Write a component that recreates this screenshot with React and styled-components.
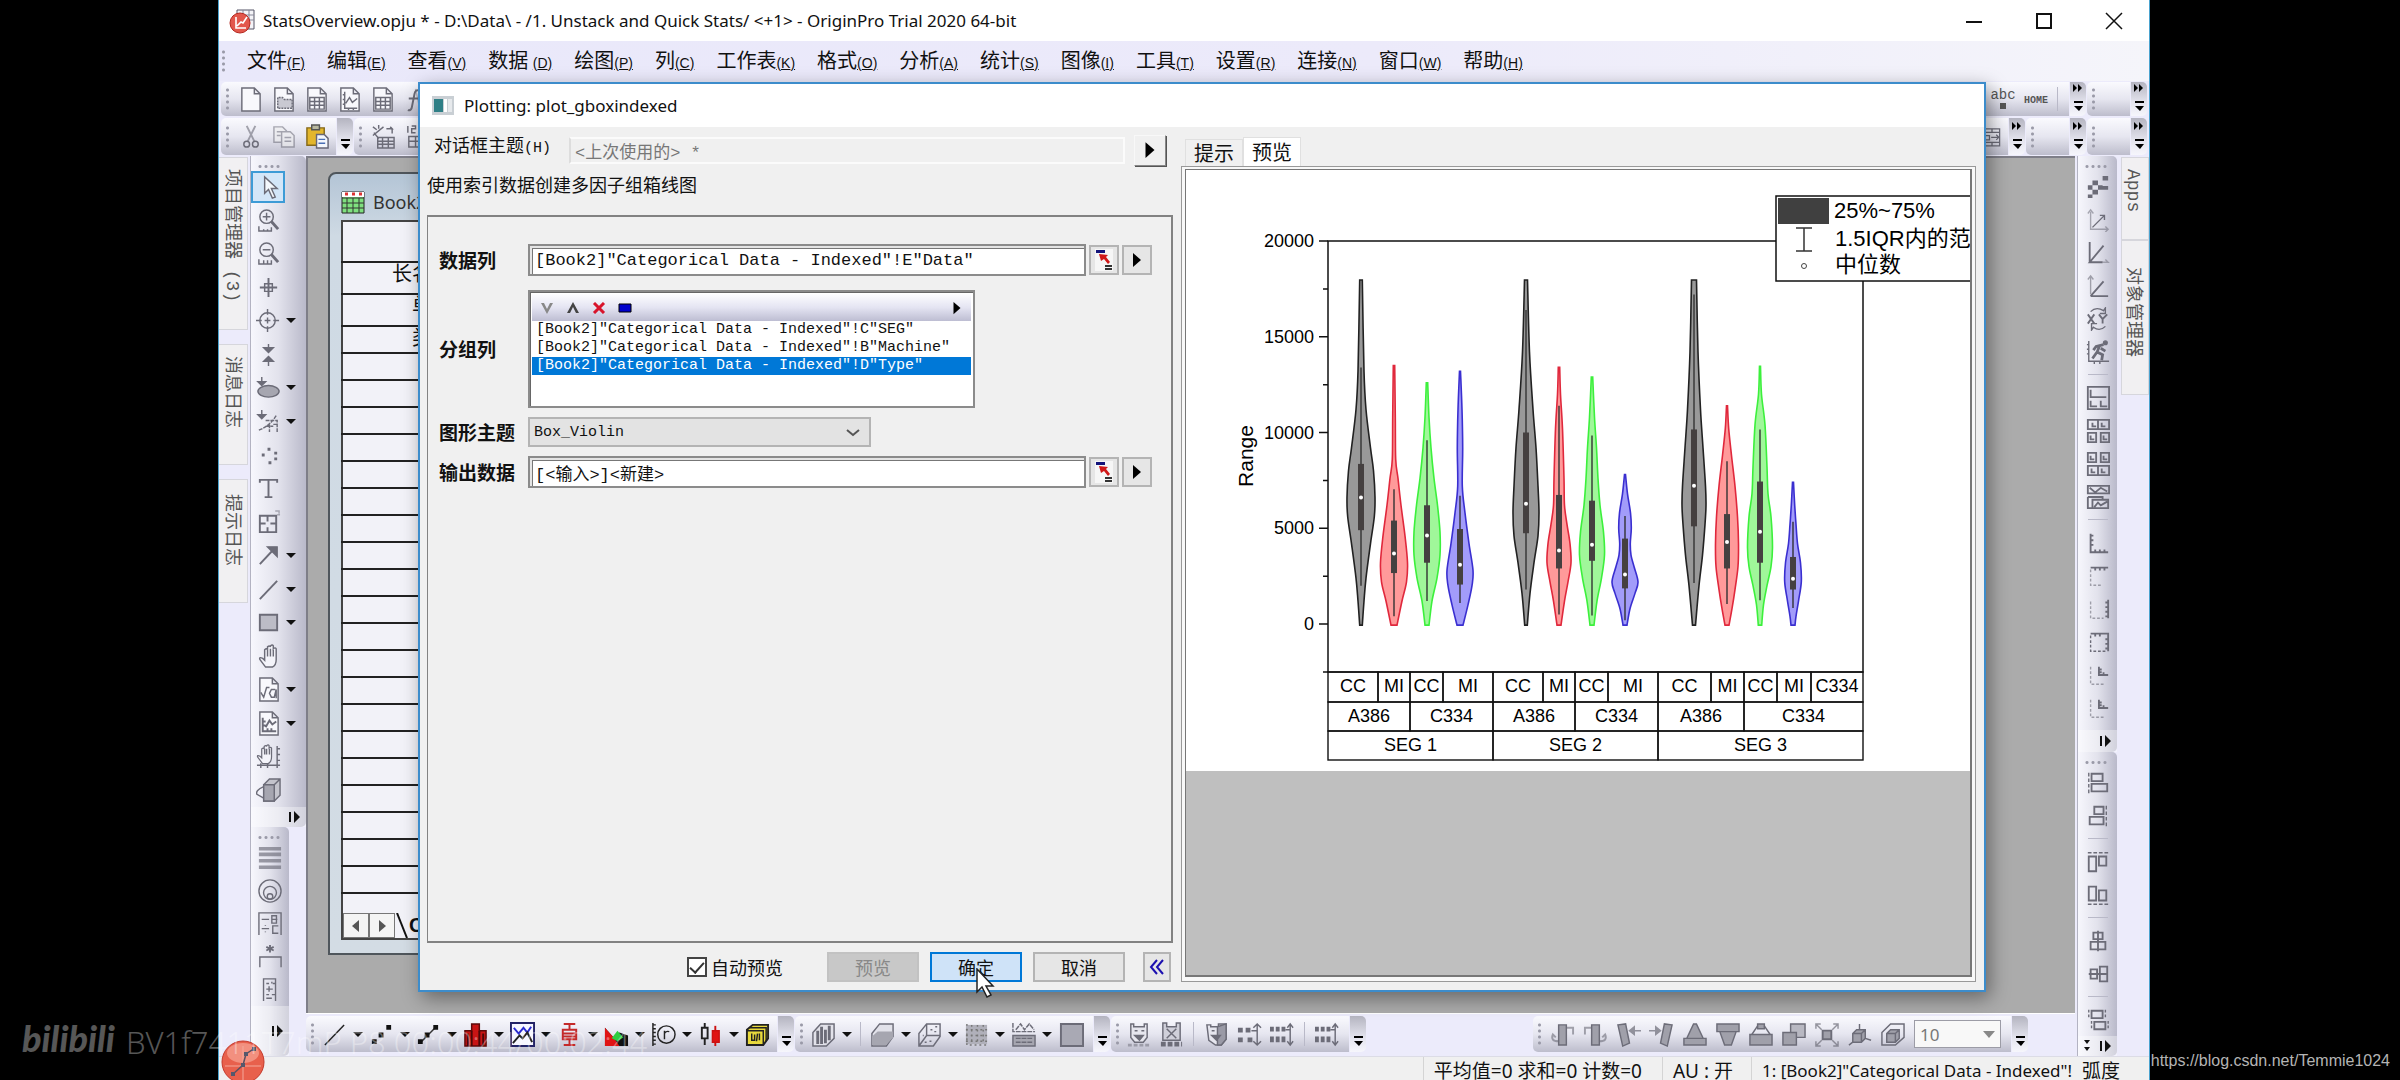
import { useState } from 'react';
import styled, { createGlobalStyle, css } from 'styled-components';

const GlobalStyle = createGlobalStyle`
  * {
    box-sizing: border-box;
  }

  body {
    margin: 0;
    background: #000;
    font-family: 'Noto Sans', 'Noto Sans CJK SC', sans-serif;
    color: #111;
  }

  button, input, select {
    font: inherit;
    color: inherit;
    margin: 0;
    padding: 0;
  }
`;

const cjk = "'Noto Sans CJK SC', sans-serif";
const mono = "'Liberation Mono', 'Noto Sans CJK SC', monospace";

/* ---------- shell ---------- */

const Screen = styled.div`
  position: relative;
  display: flex;
  height: 100vh;
  padding: 0 250px 0 218px;
  overflow: hidden;
  background: #000;
`;

const AppWindow = styled.div`
  position: relative;
  flex: 1;
  min-width: 0;
  display: flex;
  flex-direction: column;
  background: #ecebfb;
  border: solid #4aa3cf;
  border-width: 0 1px;
`;

const TitleBar = styled.header`
  display: flex;
  align-items: center;
  height: 41px;
  padding-left: 10px;
  background: #fff;
`;

const TitleText = styled.h1`
  flex: 1;
  margin: 0 0 0 8px;
  font-size: 17px;
  font-weight: 400;
  line-height: 24px;
  white-space: nowrap;
`;

const WindowButton = styled.button`
  width: 70px;
  height: 36px;
  border: 0;
  background: none;

  svg {
    display: block;
    margin: 0 auto;
  }
`;

const MenuBar = styled.nav`
  display: flex;
  align-items: center;
  gap: 22px;
  height: 40px;
  padding: 0 3px;
  background: linear-gradient(90deg, #e9e8fa, #eceafa 60%, #f5f5fa);
`;

const MenuButton = styled.button`
  border: 0;
  background: none;
  font-family: ${cjk};
  font-size: 20px;
  line-height: 30px;
  white-space: nowrap;

  span {
    font-family: 'Liberation Sans', sans-serif;
    font-size: 14px;
    text-decoration: underline;
  }
`;

const Grip = styled.i`
  flex: none;
  align-self: center;
  width: ${p => (p.$flat ? '24px' : '3px')};
  height: ${p => (p.$flat ? '3px' : '24px')};
  margin-right: ${p => p.$after || '0'};
  background-image: radial-gradient(circle, #9a9aa8 1px, transparent 2px);
  background-size: ${p => (p.$flat ? '6px 3px' : '3px 6px')};
`;

const ToolRow = styled.div`
  display: flex;
  gap: 1px;
  height: ${p => p.$height};
  padding: 1px 2px;
`;

const ToolGroup = styled.div`
  display: flex;
  align-items: center;
  flex: ${p => p.$flex || 'none'};
  width: ${p => p.$width || 'auto'};
  padding: 0 5px;
  border-radius: 5px 0 0 5px;
  background: linear-gradient(#fafafe, #e6e6f0 50%, #bdbdcc);
`;

const Overflow = styled.button`
  flex: none;
  width: 16px;
  border: 0;
  border-radius: 0 5px 5px 0;
  background: linear-gradient(#b4b4c0, #e4e4ee 60%, #f6f6fc);

  svg {
    display: block;
    margin: auto auto 2px;
  }
`;

const Spacer = styled.div`
  flex: 1;
`;

const IconButton = styled.button`
  flex: none;
  display: flex;
  align-items: center;
  justify-content: center;
  width: ${p => p.$width || '33px'};
  height: 32px;
  border: 0;
  background: none;
  color: #6c6c78;
`;

const ArrowButton = styled.button`
  flex: none;
  width: ${p => (p.$narrow ? '12px' : '17px')};
  height: 30px;
  border: 0;
  background: none;

  &::before {
    content: '';
    display: block;
    width: 0;
    margin: 0 auto;
    border: 5px solid transparent;
    border-top-color: #111;
    border-bottom-width: 0;
  }
`;

const Divider = styled.i`
  flex: none;
  align-self: center;
  ${p => (p.$flat
    ? css`width: 20px; height: 1px; margin: 6px 0;`
    : css`width: 1px; height: 24px; margin: 0 6px 0 5px;`)}
  background: #b9b9c8;
`;

/* ---------- body ---------- */

const Body = styled.div`
  flex: 1;
  min-height: 0;
  display: flex;
`;

const SideTabs = styled.div`
  display: flex;
  flex-direction: column;
  width: ${p => (p.$right ? '32px' : '29px')};
  gap: ${p => (p.$right ? '0' : '14px')};
  padding: 1px 0 0 ${p => (p.$right ? '4px' : '0')};
`;

const SideTab = styled.button`
  height: ${p => p.$height};
  padding: ${p => p.$pad || '11px'} 3px 0 0;
  border: 1px solid #d6d6dc;
  border-left-width: ${p => (p.$right ? '1px' : '0')};
  background: #f1f0f2;
  color: #555;
  font-family: ${mono};
  font-size: 18px;
  line-height: 24px;
  writing-mode: vertical-rl;
  text-orientation: sideways;
  text-align: left;
`;

const PaletteColumn = styled.div`
  display: flex;
  flex-direction: column;
  width: ${p => p.$width};
  margin-left: 2px;
  border-left: 1px solid #b3b3c2;
`;

const Palette = styled.div`
  display: flex;
  flex-direction: column;
  flex: ${p => (p.$grow ? '1' : 'none')};
  width: ${p => p.$width || 'auto'};
  padding-top: 6px;
  border-radius: 0 5px 5px 0;
  background: linear-gradient(90deg, #f7f7fd, #e2e2ec 50%, #b9b9ca);
`;

const PaletteRow = styled.div`
  flex: ${p => (p.$grow ? '1' : 'none')};
  display: flex;
  align-items: center;
  justify-content: ${p => (p.$center ? 'center' : 'flex-start')};
  min-height: 33px;
`;

const ToolButton = styled(IconButton)`
  width: 34px;
  ${p => p.$active && css`
    border: 2px solid #3d9bd6;
    background: #d3e6f8;
  `}
`;

const PaletteGrip = styled.div`
  display: flex;
  height: 8px;
  padding-left: 6px;
`;

const PaletteEnd = styled.div`
  display: flex;
  align-items: center;
  justify-content: flex-end;
  gap: 10px;
  height: ${p => p.$height || '20px'};
  padding-right: 5px;
  background: rgba(255, 255, 255, 0.35);
`;

const Center = styled.div`
  flex: 1;
  min-width: 0;
  display: flex;
  flex-direction: column;
`;

const Workspace = styled.main`
  position: relative;
  flex: 1;
  overflow: hidden;
  border: solid #7e7e88;
  border-width: 2px 0 0 2px;
  background: #ababab;
`;

const BottomTools = styled.div`
  display: flex;
  gap: 1px;
  height: 43px;
  padding: 2px 47px 4px 0;
  border-top: 1px solid #fff;
`;

const StatusBar = styled.footer`
  display: flex;
  align-items: flex-start;
  justify-content: flex-end;
  height: 24px;
  padding-right: 29px;
  background: #f0f0f0;
  border-top: 1px solid #dcdce6;
  font-size: 19px;
  line-height: 28px;
  white-space: nowrap;
`;

const StatusCell = styled.span`
  padding: 0 10px;
  border-left: 1px solid #d4d4d4;
  margin-left: ${p => p.$gap || '0'};
  font-size: ${p => (p.$long ? '17px' : '19px')};
`;

const SizeSelect = styled.select`
  appearance: none;
  width: 87px;
  height: 28px;
  margin: 0 5px;
  padding-left: 5px;
  border: 1px solid #9c9ca6;
  border-radius: 0;
  background: #f8f8f8;
  color: #777;
  font-size: 17px;
  opacity: 1;
`;

const SelectBox = styled.div`
  position: relative;
  display: inline-flex;

  svg {
    position: absolute;
    right: 11px;
    top: 50%;
    margin-top: -3px;
    pointer-events: none;
  }
`;

/* ---------- Book2 window ---------- */

const BookWindow = styled.section`
  position: absolute;
  left: 20px;
  top: 14px;
  bottom: 58px;
  width: 360px;
  display: flex;
  flex-direction: column;
  padding: 0 11px 13px;
  border: 2px solid #4f565c;
  border-radius: 8px 8px 0 0;
  background: linear-gradient(#b4c5d6, #cfdae4 8%, #d3dce4);
`;

const BookTitle = styled.h2`
  display: flex;
  align-items: center;
  gap: 8px;
  height: 46px;
  margin: 0;
  padding-top: 10px;
  font-size: 18px;
  font-weight: 400;
  color: #333;
`;

const Sheet = styled.table`
  flex: none;
  width: 100%;
  border-collapse: collapse;
  border-left: 2px solid #444;
  background: #f2f2f8;

  th {
    height: 27px;
    padding: 0 223px 0 0;
    border-bottom: 2px solid #222;
    font-family: ${cjk};
    font-size: 20px;
    font-weight: 400;
    line-height: 20px;
    text-align: right;
    vertical-align: top;
    white-space: nowrap;
  }

  tr:first-child th {
    height: 41px;
    border-top: 2px solid #444;
  }

  tr:nth-child(2) th,
  tr:nth-child(3) th {
    height: 32px;
  }
`;

const SheetTabs = styled.div`
  display: flex;
  align-items: flex-end;
  flex: 1;
  background: #f2f2f8;
  border-left: 2px solid #444;
  border-bottom: 2px solid #444;
  font: bold 20px/26px 'Liberation Sans', sans-serif;
`;

const ScrollButton = styled.button`
  width: 26px;
  height: 25px;
  border: 1px solid #777;
  background: #f4f4f4;

  svg {
    display: block;
    margin: auto;
  }
`;

/* ---------- dialog ---------- */

const Dialog = styled.section`
  position: absolute;
  left: 199px;
  right: 163px;
  top: 82px;
  bottom: 88px;
  display: flex;
  flex-direction: column;
  border: 2px solid #3c8ccb;
  background: #f0f0f0;
  box-shadow: 4px 6px 18px rgba(0, 0, 0, 0.4);
  font-family: ${cjk};
`;

const DialogTitle = styled.h2`
  display: flex;
  align-items: center;
  gap: 10px;
  height: 43px;
  margin: 0;
  padding: 0 12px;
  background: #fff;
  font-family: 'Noto Sans', sans-serif;
  font-size: 17px;
  font-weight: 400;
`;

const DialogBody = styled.div`
  flex: 1;
  min-height: 0;
  display: grid;
  grid-template-columns: 746px 1fr;
  gap: 8px;
  padding: 8px 8px 8px 7px;
`;

const FormPane = styled.form`
  display: flex;
  flex-direction: column;
  min-height: 0;
`;

const ThemeRow = styled.div`
  display: flex;
  align-items: center;
  height: 31px;
  padding: 0 7px;
  font-size: 18px;

  label {
    width: 135px;
    line-height: 24px;
    margin-bottom: 8px;
    white-space: nowrap;
  }

  label span {
    font-family: ${mono};
    font-size: 15px;
  }
`;

const ThemeInput = styled.input`
  flex: 1;
  height: 27px;
  margin-right: 9px;
  padding: 0 4px;
  border: 2px solid #fbfbfb;
  border-left-color: #ddd;
  background: #f0f0f0;
  color: #777;
  font-family: ${mono};
  font-size: 17px;
`;

const RaisedButton = styled.button`
  width: 32px;
  height: 31px;
  border: 1px solid;
  border-color: #f8f8f8 #888 #888 #f8f8f8;
  background: #f0f0f0;
  box-shadow: 1px 1px 0 #555;
`;

const Description = styled.p`
  margin: 6px 0 19px;
  font-size: 18px;
  line-height: 24px;
`;

const Options = styled.div`
  flex: 1;
  display: flex;
  flex-direction: column;
  gap: 9px;
  padding: 27px 19px 0 11px;
  border: 2px solid #828282;
  border-left-width: 1px;
`;

const OptionRow = styled.div`
  display: flex;
  align-items: center;
  gap: 3px;
  margin-bottom: ${p => p.$after || '0'};
`;

const OptionLabel = styled.label`
  width: 86px;
  font-size: 19px;
  font-weight: 700;
  line-height: 24px;
`;

const DataInput = styled.input`
  flex: 1;
  height: 32px;
  padding: 0 5px;
  border: 2px solid #8b8b8b;
  background: #fff;
  box-shadow: inset 1px 1px 0 1px #e4e4e4, inset 2px 2px 0 1px #777;
  font-family: ${mono};
  font-size: 17px;
`;

const SmallButton = styled.button`
  display: flex;
  align-items: center;
  justify-content: center;
  width: 30px;
  height: 30px;
  border: 2px solid #b4b4b4;
  background: #e6e6e6;
`;

const GroupBox = styled.div`
  width: 447px;
  height: 118px;
  padding: 2px;
  border: 2px solid #8b8b8b;
  background: #fff;
  box-shadow: inset 1px 1px 0 #666;
`;

const GroupTools = styled.div`
  display: flex;
  align-items: center;
  gap: 1px;
  height: 27px;
  padding: 0 2px;
  background: linear-gradient(#fdfdff, #e4e4f2 50%, #bdbdd2);

  button {
    display: flex;
    justify-content: center;
    width: 25px;
    border: 0;
    background: none;
  }
`;

const GroupList = styled.ul`
  margin: 0;
  padding: 0;
  list-style: none;
  font-family: ${mono};
  font-size: 15px;
  line-height: 18px;
`;

const GroupItem = styled.li`
  padding-left: 4px;
  white-space: pre;
  ${p => p.$selected && css`
    background: #0078d7;
    color: #fff;
  `}
`;

const ThemeSelect = styled.select`
  appearance: none;
  width: 343px;
  height: 30px;
  padding: 0 4px;
  border: 2px solid #b4b4b4;
  border-radius: 0;
  background: #e3e3e3;
  font-family: ${mono};
  font-size: 15px;
`;

const Actions = styled.div`
  display: flex;
  align-items: center;
  justify-content: flex-end;
  padding: 9px 2px 0 0;
  font-size: 18px;
`;

const CheckLabel = styled.label`
  display: flex;
  align-items: center;
  gap: 4px;
  margin-right: 44px;
  line-height: 24px;
`;

const CheckBox = styled.input`
  appearance: none;
  position: relative;
  width: 20px;
  height: 20px;
  border: 2px solid #444;
  background: #fff;

  &:checked::after {
    content: '';
    position: absolute;
    left: 4px;
    top: 0;
    width: 6px;
    height: 12px;
    border: solid #333;
    border-width: 0 2px 2px 0;
    transform: rotate(42deg);
  }
`;

const ActionButton = styled.button`
  width: 92px;
  height: 30px;
  margin-right: 11px;
  border: 2px solid ${p => (p.$primary ? '#0078d7' : '#b4b4b4')};
  background: ${p => (p.$primary ? '#cfe3f8' : '#e6e6e6')};
  font-size: 18px;
  line-height: 24px;

  &:disabled {
    border-color: #c2c2c2;
    background: #c8c8c8;
    color: #888;
  }
`;

const CollapseButton = styled(SmallButton)`
  margin-left: 7px;
  width: 28px;
`;

const PreviewPane = styled.div`
  display: flex;
  flex-direction: column;
  min-width: 0;
  min-height: 0;
`;

const TabList = styled.div`
  display: flex;
  align-items: flex-end;
  height: 31px;
  padding: 2px 4px 0;
`;

const Tab = styled.button`
  width: 58px;
  height: ${p => (p.$active ? '29px' : '27px')};
  border: 1px solid #e0e0e0;
  border-bottom: 0;
  background: ${p => (p.$active ? '#fff' : '#f0f0f0')};
  font-size: 20px;
  line-height: 24px;
`;

const PreviewFrame = styled.div`
  flex: 1;
  min-height: 0;
  padding: 2px 3px 4px;
  border: 1px solid #999;
  background: #f8f8f8;
`;

const PreviewArea = styled.div`
  height: 100%;
  overflow: hidden;
  border: 2px solid #777;
  border-width: 1px 2px 2px 1px;
  background: #bfbfbf;
`;

const ChartSvg = styled.svg`
  display: block;
  background: #fff;
  font-family: 'Liberation Sans', 'Noto Sans CJK SC', sans-serif;
  font-size: 18px;
`;

/* ---------- marks that float over the window ---------- */

const Watermark = styled.div`
  position: absolute;
  left: 22px;
  bottom: 14px;
  display: flex;
  align-items: center;
  gap: 11px;
  color: rgba(255, 255, 255, 0.34);
  font-family: 'Noto Sans', sans-serif;
  font-size: 31px;
  font-weight: 300;
  line-height: 38px;
  white-space: nowrap;
  pointer-events: none;

  b {
    margin-bottom: 8px;
    font: italic 900 36px/40px Lato, sans-serif;
  }
`;

const SourceLink = styled.a`
  position: absolute;
  right: 10px;
  bottom: 8px;
  color: #b4b4b4;
  font: 16px/22px 'Liberation Sans', sans-serif;
  text-decoration: none;
`;

const Ball = styled.svg`
  position: absolute;
  left: 221px;
  bottom: -4px;
`;

const Cursor = styled.svg`
  position: absolute;
  left: 555px;
  bottom: -8px;
`;

/* ---------- icons ---------- */

const page = <path d="M4 1h13l6 6v18H4zM17 1v6h6" fill="#f8f8fc" />;
const hand = 'M8 24l-6-8q-1-3 3-1l2 2V6q2-2 3 0V3q2-2 3 0v-1q2-2 3 0v3q2-2 3 0v11q0 6-4 8z';

const icons = {
  page,
  folder: <>{page}<path d="M7 22V11h5l2 2h8v9z" fill="#c9c9d2" strokeDasharray="2 1" /></>,
  sheet: <>{page}<path d="M6 11h15v12H6zM6 15h15M6 19h15M11 11v12M16 11v12" /></>,
  graph: <>{page}<path d="M8 5v17h13M6 8h2M6 13h2M6 18h2M12 22v2M17 22v2M9 17l4-6 3 5 5-4" /></>,
  fx: <><path d="M17 4q-4-2-5 3L9 22q-1 3-4 2M6 12h10" strokeWidth="2" /><path d="M13 2l4 18" opacity=".4" /></>,
  cut: <><path d="M8 2l8 16M17 2L9 18" strokeWidth="2" opacity=".6" /><circle cx="8" cy="21" r="3" /><circle cx="17" cy="21" r="3" /></>,
  copy: <g opacity=".55"><path d="M2 3h9l4 4v12H2z" fill="#eee" /><path d="M10 8h9l4 4v12H10z" fill="#eee" /><path d="M5 8h5M5 12h4M13 14h7M13 18h7" /></g>,
  paste: <><path d="M2 4h18v18H2z" fill="#e3b62c" stroke="#86691a" /><path d="M7 1h8v5H7z" fill="#b9b9a0" stroke="#555" /><path d="M12 11h8l4 4v10H12z" fill="#f4f7fd" stroke="#667" /><path d="M14 16h7M14 20h7" stroke="#4a6fb5" /></>,
  wand: <><path d="M2 12L13 3M2 3l4 3M8 1v4M3 9l5 6M16 5h6l-2-2M22 5v5" /><path d="M7 14h17v11H7zM7 18h17M7 21h17M12 14v11M18 14v11" /></>,
  digits: <><path d="M4 2v7M8 2h4v3H8v4h4M16 2h4v7h-4M16 5h4" /><path d="M5 13h17v11H5zM5 18h17M12 13v11" /></>,
  pointer: <path d="M9 3v17l4-4 4 9 3-1-4-9h6z" fill="#f4f8fc" />,
  zoomIn: <><circle cx="11" cy="9" r="7" /><path d="M16 14l7 8" strokeWidth="3" /><path d="M11 5v8M7 9h8M3 19v5h13v-4M8 22v2M12 22v2" /></>,
  zoomOut: <><circle cx="11" cy="9" r="7" /><path d="M16 14l7 8" strokeWidth="3" /><path d="M7 9h8M3 19v5h13v-4M8 20v4M12 20v4" /></>,
  cross: <><path d="M13 3v20M4 13h18" strokeWidth="2" /><path d="M9 9h8v8H9z" /></>,
  target: <><circle cx="12" cy="13" r="8" /><path d="M12 1v6M12 19v6M0 13h6M18 13h6M9 13h6M12 10v6" /></>,
  meet: <path d="M13 2v6M13 25v-6M8 6l5 5 5-5zM8 20l5-5 5 5z" fill="currentColor" />,
  mask: <><ellipse cx="13" cy="17" rx="11" ry="6" fill="#a6a6b0" /><path d="M6 2v8M2 7l4 4 4-4z" fill="currentColor" /></>,
  region: <><path d="M6 1v8M2 6l4 4 4-4z" fill="currentColor" /><path d="M3 22Q14 18 21 7M10 12h12v12M14 16v8M18 16h5M10 18h8" strokeDasharray="4 1" /></>,
  dots: <path d="M6 11h3v3H6zM12 5h3v3h-3zM13 19h3v3h-3zM19 9h3v3h-3zM19 15h3v3h-3z" fill="currentColor" stroke="none" />,
  text: <path d="M4 7V4h18v3M13 4v18M9 22h8" strokeWidth="2" />,
  tableAdd: <><path d="M4 6h17v17H4zM12 6v6M12 18v5M4 14h6M15 14h6" strokeWidth="2" /><path d="M20 1h4v3M22 5h3" opacity=".5" /></>,
  arrow: <><path d="M4 22L18 7" strokeWidth="2" /><path d="M12 4h10v10z" fill="currentColor" /></>,
  line: <path d="M4 23L22 4" strokeWidth="2" />,
  rect: <path d="M4 5h18v16H4z" fill="#bcbcc6" strokeWidth="2" />,
  hand: <><path d={hand} fill="#f4f4fa" transform="translate(2 0)" /><path d="M12 6v7M15 5v8M18 6v7" /></>,
  sqrt: <>{page}<path d="M5 16l3 5 3-10h3M20 13h-4l-2 4 2 4h3l2-8v9" /></>,
  smallGraph: <>{page}<path d="M7 7v14h14M7 11h3M7 15h3M12 21v-3M16 21v-3M10 17l4-7 3 4 4-3" strokeWidth="2" /></>,
  handAxis: <><path d={hand} fill="#f4f4fa" transform="scale(.85)" /><path d="M9 5v6M11 5v6M14 5v6M22 2v23M1 22h24M22 5h3M22 11h3M22 17h3M5 20v5M12 20v5" /></>,
  cube: <><path d="M8 7h11v17H8z" fill="#a6a6b0" /><path d="M8 7l6-6h11v17l-6 6M19 7l6-6" fill="#c4c4cc" /><path d="M8 7h11v17H8z" fill="#a6a6b0" /><path d="M8 9q-9 4-7 8l7 4" /></>,
  lines: <path d="M1 3h24M1 9h24M1 16h24M1 23h24" strokeWidth="4" opacity=".65" />,
  rings: <><circle cx="13" cy="13" r="12" /><circle cx="13" cy="15" r="7" /><circle cx="13" cy="19" r="3" /></>,
  fraction: <><path d="M1 25V1h24v24M4 8h8M4 18h8" /><path d="M15 4h5v8h-5zM15 8h6M22 15h-6v8h6M8 14v1M8 21v1" /></>,
  star: <><path d="M13 0v8M9 2l8 4M17 2L9 6" strokeWidth="2" /><path d="M2 24V13h23v11" /></>,
  ruler: <path d="M6 25V1h13v24M9 6h3M16 6h3M9 12h7M12 9v6M9 18h3M15 18h4M9 22h6M15 4v2" />,
  checker: <path d="M2 11h5v5H2zM7 6h6v5H7zM13 11h5v5h-5zM18 1h6v5h-6zM7 16h6v5H7zM2 21h5v4H2zM18 12h6v4h-6z" fill="currentColor" stroke="none" />,
  axisUp: <><path d="M5 4v19h18M2 6l3-4 3 4M21 20l3 3-3 3" opacity=".55" /><path d="M7 21L20 8M15 8h5v5" /></>,
  axisA: <><path d="M4 1v22h14L4 23 19 5" strokeWidth="2" /><path d="M18 23h6l-3-3" opacity=".5" /></>,
  axisB: <><path d="M5 24h19M5 24L19 8" strokeWidth="2" /><path d="M5 22V3M2 6l3-4 3 4" opacity=".6" /></>,
  swapXY: <><path d="M2 8l7 10M9 8L2 18M14 8l4 5 5-5M18 13v5" strokeWidth="2" /><path d="M5 5q6-6 14-1l2-3v6h-6M21 21q-6 6-13 1l-2 3v-7h6" /></>,
  runner: <><path d="M3 1v22h22M1 5h2M1 10h2M1 15h2M9 23v3M15 23v3" /><path d="M19 5l-8 2-3 4M15 6l-3 7 6 3-1 6M12 13l-5 7M16 9l5 3" strokeWidth="3" /><circle cx="21" cy="3" r="2" fill="currentColor" /></>,
  layoutA: <path d="M2 1h23v24H2zM5 4v8h17M5 16v6h7M16 16v6h7" strokeWidth="2" />,
  layoutB: <path d="M2 1h23v10H2zM13 1v10M7 4v4h4M17 4v4h4M2 15h9v10H2zM16 15h9v10h-9zM5 18v4h4M19 18v4h4" strokeWidth="2" />,
  layoutC: <path d="M2 15h23v10H2zM13 15v10M6 18v4h4M17 18v4h4M2 1h9v10H2zM16 1h9v10h-9zM5 4v4h4M19 4v4h4" strokeWidth="2" />,
  layoutD: <path d="M2 1h23v8H2zM4 3l6 5 6-5 7 4M2 13h16v3M2 13v12h4M7 16h17v9H7zM9 24l4-5 3 3 7-4" strokeWidth="2" />,
  frameL: <path d="M5 3v20h19M5 5h3M5 10h3M5 15h3M10 23v-3M15 23v-3M20 23v-3" strokeWidth="2" />,
  frameTop: <><path d="M5 4h19M10 4v3M15 4v3M20 4v3" strokeWidth="2" /><path d="M5 6v17h13" strokeDasharray="3 2" opacity=".6" /></>,
  frameR: <><path d="M24 3v20M21 6h3M21 11h3M21 16h3M21 21h3" strokeWidth="2" /><path d="M5 5v18h14" strokeDasharray="3 2" opacity=".6" /></>,
  frameBox: <><path d="M5 4h19v19M10 4v3M15 4v3M21 10h3M21 15h3M21 20h3" strokeWidth="2" /><path d="M5 6v17h18" strokeDasharray="3 2" /></>,
  inset: <><path d="M14 4v9h10M14 7h3M14 10h3M19 13v-3" strokeWidth="2" /><path d="M5 4v19h14" strokeDasharray="3 2" opacity=".6" /></>,
  alignL: <><path d="M6 3h12v8H6zM6 14h17v8H6z" strokeWidth="2" /><path d="M3 2v22" strokeDasharray="4 2" /></>,
  alignR: <><path d="M9 3h10v8H9zM4 14h15v8H4z" strokeWidth="2" /><path d="M22 2v22" strokeDasharray="4 2" /></>,
  alignT: <><path d="M3 7h8v16H3zM14 7h8v10h-8z" strokeWidth="2" /><path d="M2 3h22" strokeDasharray="4 2" /></>,
  alignB: <><path d="M3 4h8v15H3zM14 8h8v11h-8z" strokeWidth="2" /><path d="M2 23h22" strokeDasharray="4 2" /></>,
  centerV: <path d="M8 4h10v7H8zM5 14h16v8H5zM13 2v22" strokeWidth="2" />,
  centerH: <path d="M5 8h7v10H5zM15 5h8v16h-8zM3 13h21" strokeWidth="2" />,
  sameW: <><path d="M6 3h12v8H6zM9 15h12v8H9z" strokeWidth="2" /><path d="M3 2v10M21 2v10M6 14v10M24 14v10" strokeDasharray="3 2" /></>,
  cellA: <path d="M0 4h22v20H0M0 8h22M0 20h22M13 4v4M13 20v4M5 12h5v5H5zM12 14h9M18 11l3 3-3 3" />,
  plotLine: <path d="M3 24L23 3" stroke="#222" />,
  plotScatter: <path d="M3 18h5v5H3zM10 11h5v5h-5zM18 3h5v5h-5z" fill="#111" stroke="none" />,
  plotLineSym: <><path d="M5 21L21 5" stroke="#333" /><path d="M2 18h5v5H2zM9 11h5v5H9zM18 3h5v5h-5z" fill="#111" stroke="none" /></>,
  plotColumn: <><path d="M2 9h7V2h8v7h7v16H2z" fill="#c81414" stroke="#5c0a0a" /><path d="M9 9v16M17 9v16M5 12v13M21 12v13" stroke="#4a0808" strokeWidth="2" /></>,
  plotMulti: <><path d="M1 1h24v24H1z" fill="#f6f6ff" stroke="#222266" strokeWidth="2" /><path d="M4 6l5 6 5-6 4 5 4-6" stroke="#2a2ad0" strokeWidth="2" /><path d="M3 22l7-8 3 3 5-6 5 10" stroke="#222" strokeWidth="2" /></>,
  plotBox: <path d="M7 2h12M13 2v6M6 8h14v10H6zM6 12h14M6 15h14M13 18v6M7 24h12" stroke="#c42a2a" strokeWidth="2" />,
  plotArea: <><path d="M1 25V6l9 10 6-5 9 3v11z" fill="#111" stroke="none" /><path d="M1 6l9 10 6 9H1z" fill="#e01414" stroke="none" /><path d="M8 17l6-8 6 7-6 4z" fill="#2ecc40" stroke="none" /></>,
  plotPolar: <><circle cx="16" cy="13" r="9" stroke="#222" /><path d="M2 1v24M2 3h3M2 7h3M2 11h3M2 15h3M2 19h3M2 23h3M14 9v9M14 12q1-3 5-2" stroke="#222" /></>,
  plotCandle: <><path d="M7 1v5M4 6h6v11H4zM7 17v7" stroke="#222" strokeWidth="2" /><path d="M18 4v21" stroke="#c11" strokeWidth="2" /><path d="M15 9h7v12h-7z" fill="#e01414" stroke="#c11" /></>,
  plotTemplate: <><path d="M2 8l6-5h16v14l-5 7H2z" fill="#e8d93c" stroke="#222" strokeWidth="2" /><path d="M2 9h17v15M5 6h17v14M7 12v7h3v-6M13 12l-1 8M15 12v7" stroke="#222" /></>,
  cubeBars: <><path d="M2 11L10 2h14v15l-8 8H2z" fill="#e2e2ea" /><path d="M7 9v14M11 5v18M15 8v14M19 4v15" strokeWidth="3" /></>,
  cubeFill: <><path d="M2 12L10 2h14v13l-7 10H2z" fill="#e2e2ea" /><path d="M2 15l6-5h16v6l-7 8H2z" fill="#a6a6b0" stroke="none" /></>,
  cubeDots: <path d="M2 12L10 2h14v13l-7 10H2zM10 2v12h14M10 14l-8 11M14 8h2M19 5h2M18 10h2M6 14h1M13 20h2M8 21h2" />,
  gridFill: <><path d="M2 3h22v20H2z" fill="#b0b0ba" stroke="none" /><path d="M3 2v22h22M8 3v20M14 3v20M20 3v20M2 8h22M2 14h22M2 20h22" strokeDasharray="2 3" stroke="#777" /></>,
  split: <><path d="M2 14h23v11H2z" fill="#a6a6b0" /><path d="M2 1v9h23M5 8l5-6 4 6 5-6 5 6M5 17h18M5 21h18" strokeDasharray="5 1" /></>,
  block: <path d="M2 2h23v23H2z" fill="#a9a9b4" strokeWidth="2" />,
  mask1: <><path d="M5 2h3v3h11V2h3v14l-4 5H9l-4-5z" fill="#e6e6ee" /><path d="M9 9h3M16 9h3M9 14h9l-4 5z" fill="currentColor" /><path d="M2 24h22" strokeDasharray="4 2" strokeWidth="3" opacity=".5" /></>,
  mask2: <><path d="M4 1h4v4h10V1h4v18H4z" fill="#d0d0da" /><path d="M8 7l10 10M18 7L8 17" /><path d="M2 23h22" strokeDasharray="5 2" strokeWidth="5" /></>,
  mask3: <><path d="M3 3h4v2h8V2h8v16l-5 6h-6l-7-5z" fill="#e6e6ee" /><path d="M14 5l9-3v16l-5 6h-4z" fill="#9a9aa6" /><path d="M8 14h9l-4 5zM8 9h3" fill="currentColor" /></>,
  bars1: <><path d="M1 6h5v5H1zM9 6h5v5H9zM1 16h5v5H1zM11 16h5v5h-5z" fill="currentColor" stroke="none" /><path d="M21 2v22M17 6l4-4 4 4M17 20l4 4 4-4M15 9h6" /></>,
  bars2: <><path d="M0 5h4v5H0zM6 5h4v5H6zM12 5h4v5h-4zM0 15h4v6H0zM6 15h4v6H6zM12 15h4v6h-4z" fill="currentColor" stroke="none" /><path d="M21 2v22M18 6l3-4 3 4M18 20l3 4 3-4M16 8h5" /></>,
  rotL: <><path d="M9 3h8v21H9z" fill="#a0a0aa" /><path d="M17 6h7v7M9 20q-9 0-6-7l3 3" opacity=".6" strokeWidth="2" /></>,
  rotR: <><path d="M9 3h8v21H9z" fill="#a0a0aa" /><path d="M9 6H2v7M17 20q9 0 6-7l-3 3" opacity=".6" strokeWidth="2" /></>,
  skewL: <><path d="M2 3l8-1 4 20-7 3z" fill="#a0a0aa" /><path d="M26 9h-9M19 5l-5 4 5 4z" fill="currentColor" opacity=".7" /></>,
  skewR: <><path d="M24 3l-8-1-4 20 7 3z" fill="#a0a0aa" /><path d="M0 9h9M7 5l5 4-5 4z" fill="currentColor" opacity=".7" /></>,
  trapUp: <path d="M12 2h3l7 15h3v7H2v-7h3zM5 17h17" fill="#a0a0aa" />,
  trapDown: <path d="M2 2h23v8h-3l-5 14h-7L5 10H2zM5 10h17" fill="#a0a0aa" />,
  perspective: <><path d="M2 13h23v11H2zM10 2h7v5h-7z" fill="#a0a0aa" /><path d="M10 4L4 13M17 4l6 9" /></>,
  stack: <><path d="M10 2h15v14H10z" fill="#b8b8c2" /><path d="M2 11h14v13H2z" fill="#a0a0aa" /></>,
  expand: <><path d="M9 9h9v9H9z" fill="#a0a0aa" strokeWidth="2" /><path d="M2 7V2h5M20 2h5v5M25 20v5h-5M7 25H2v-5M2 2l6 6M25 2l-6 6M2 25l6-6M25 25l-6-6" opacity=".7" /></>,
  box3d: <path d="M6 12l4-4h9v9l-4 4H6zM6 12h9v9M15 12l4-4M13 2v6M2 24l4-3M19 17l6 2" fill="#a0a0aa" />,
  box3dFrame: <><path d="M2 11l9-9h14v14l-9 8H2z" /><path d="M7 12l4-4h9v9l-4 4H7zM7 12h9v9M16 12l4-4" fill="#a0a0aa" /></>,
};

const Icon = ({ name, size = 25 }) => (
  <svg width={size} height={size} viewBox="0 0 26 26" fill="none" stroke="currentColor" strokeWidth="1.5" aria-hidden="true">
    {icons[name]}
  </svg>
);

const RightArrow = ({ size = 16 }) => (
  <svg width={size} height={size} viewBox="0 0 16 16"><path d="M4 1l8 7-8 7z" fill="#000" /></svg>
);

const OverflowButton = ({ more }) => (
  <Overflow aria-label="Toolbar options">
    <svg width="12" height="30" viewBox="0 0 12 30">
      {more && <path d="M1 1l4 4-4 4zM6 1l4 4-4 4z" />}
      <path d="M2 18h9v2H2zM2 23h9l-4 5z" />
    </svg>
  </Overflow>
);

const EndArrow = () => (
  <svg width="12" height="12" viewBox="0 0 12 12"><path d="M0 1h2v10H0zM5 0l6 6-6 6z" fill="#111" /></svg>
);

/* ---------- data ---------- */

const menus = [
  ['文件', 'F'], ['编辑', 'E'], ['查看', 'V'], ['数据 ', 'D'], ['绘图', 'P'], ['列', 'C'],
  ['工作表', 'K'], ['格式', 'O'], ['分析', 'A'], ['统计', 'S'], ['图像', 'I'], ['工具', 'T'],
  ['设置', 'R'], ['连接', 'N'], ['窗口', 'W'], ['帮助', 'H'],
];

const leftTools = [
  ['pointer'], ['zoomIn'], ['zoomOut'], ['cross'], ['target', true], ['meet'], ['mask', true],
  ['region', true], ['dots'], ['text'], ['tableAdd'], ['arrow', true], ['line', true],
  ['rect', true], ['hand'], ['sqrt', true], ['smallGraph', true], ['handAxis'], ['cube'],
];

const rightTools = [
  'checker', 'axisUp', 'axisA', 'axisB', 'swapXY', 'runner', '|',
  'layoutA', 'layoutB', 'layoutC', 'layoutD', '|',
  'frameL', 'frameTop', 'frameR', 'frameBox', 'inset', 'inset',
];

const alignTools = ['alignL', 'alignR', '|', 'alignT', 'alignB', '|', 'centerV', 'centerH', '|', 'sameW'];

const plotTools = [
  'plotLine', 'plotScatter', 'plotLineSym', 'plotColumn', 'plotMulti',
  'plotBox', 'plotArea', 'plotPolar', 'plotCandle',
];

const maskTools = ['mask1', 'mask2', '|', 'mask3', 'bars1', 'bars2', '|', 'bars2'];

const objectTools = [
  'rotL', 'rotR', 'skewL', 'skewR', 'trapUp', 'trapDown',
  'perspective', 'stack', 'expand', 'box3d', 'box3dFrame',
];

const sheetRows = ['', '长名称', '单位', '类别', ...Array(20).fill('')];

const groupItems = [
  '[Book2]"Categorical Data - Indexed"!C"SEG"',
  '[Book2]"Categorical Data - Indexed"!B"Machine"',
  '[Book2]"Categorical Data - Indexed"!D"Type"',
];

const palette = {
  black: ['#222', '#999'],
  red: ['#e0283c', '#ff9a9a'],
  green: ['#3cf03c', '#a0f79a'],
  blue: ['#3a2fd0', '#a29cfa'],
};

// shape: [value, half width] from the top of the violin to its foot
const violins = [
  { x: 175, color: 'black', whisker: [2000, 13400], box: [4900, 8360], median: 6600,
    shape: [[17960, 1.3], [13200, 3], [11200, 5], [9200, 9.5], [8000, 12.5], [6600, 14], [5600, 13.3], [4200, 9.5], [2400, 5], [1200, 3], [-60, 1.3]] },
  { x: 208, color: 'red', whisker: [400, 7040], box: [2660, 5400], median: 3680,
    shape: [[13500, 0.7], [10800, 1.3], [8600, 1.7], [7600, 4], [6200, 7], [4600, 11], [3200, 13.5], [2200, 12.5], [1200, 8], [-60, 3]] },
  { x: 241, color: 'green', whisker: [1200, 9600], box: [3200, 6200], median: 4620,
    shape: [[12600, 0.7], [10800, 2], [9200, 4], [7600, 7], [6200, 10.5], [4800, 13], [3600, 13], [2400, 10], [1200, 5], [-60, 2]] },
  { x: 274, color: 'blue', whisker: [1100, 6700], box: [2060, 4960], median: 3100,
    shape: [[13200, 0.5], [11200, 2], [9200, 2.7], [7200, 2.3], [5800, 5], [4200, 9], [2800, 13], [2000, 12], [1000, 8], [-60, 3]] },
  { x: 340, color: 'black', whisker: [1800, 16400], box: [4740, 10000], median: 6280,
    shape: [[17960, 1.5], [14200, 3.5], [11200, 7], [9200, 10], [7200, 12], [5800, 13], [4600, 12], [3200, 8], [1600, 4], [-60, 1.3]] },
  { x: 373, color: 'red', whisker: [500, 11400], box: [2900, 6740], median: 3840,
    shape: [[13400, 0.7], [12000, 1.5], [10200, 3.5], [7600, 5], [6200, 5.5], [5200, 8], [4200, 11], [3200, 12], [2200, 9], [1200, 5.5], [-60, 2]] },
  { x: 406, color: 'green', whisker: [440, 9840], box: [3300, 6440], median: 4140,
    shape: [[12900, 0.7], [10800, 2.5], [9200, 4.5], [7600, 6], [6200, 8], [4800, 11.5], [3600, 12.5], [2400, 9.5], [1200, 5], [-60, 2]] },
  { x: 439, color: 'blue', whisker: [200, 5640], box: [1860, 4460], median: 2580,
    shape: [[7800, 0.5], [6800, 2.5], [5800, 5.5], [5000, 6.3], [4200, 5.3], [3600, 6], [3000, 9], [2200, 13], [1600, 10], [800, 5], [-60, 2]] },
  { x: 508, color: 'black', whisker: [2140, 17200], box: [5100, 10160], median: 7220,
    shape: [[17960, 2.5], [14200, 4], [11200, 6.5], [9200, 9], [7200, 11.5], [6200, 12], [5200, 11], [3600, 8.5], [2000, 5], [-60, 1.5]] },
  { x: 541, color: 'red', whisker: [1040, 8500], box: [2900, 5740], median: 4280,
    shape: [[11400, 0.5], [10200, 1.7], [8800, 4.5], [7200, 8], [5600, 10.5], [4200, 11.5], [3000, 11], [1800, 8], [800, 5], [-60, 2]] },
  { x: 574, color: 'green', whisker: [1240, 10160], box: [3200, 7440], median: 4820,
    shape: [[13460, 0.5], [12000, 1.5], [10400, 5], [8200, 7], [6800, 8], [5600, 11], [4000, 12.5], [3000, 11], [2000, 7], [1000, 3.5], [-60, 1.7]] },
  { x: 607, color: 'blue', whisker: [840, 5340], box: [1800, 3500], median: 2360,
    shape: [[7400, 0.5], [6200, 1.7], [5200, 3], [4200, 4.5], [3200, 7.5], [2200, 8.3], [1200, 5.5], [400, 3], [-60, 2]] },
];

const typeCells = [
  [142, 192, 'CC'], [192, 224, 'MI'], [224, 257, 'CC'], [257, 307, 'MI'],
  [307, 357, 'CC'], [357, 389, 'MI'], [389, 422, 'CC'], [422, 472, 'MI'],
  [472, 525, 'CC'], [525, 558, 'MI'], [558, 591, 'CC'], [591, 625, 'MI'], [625, 677, 'C334'],
];

const machineCells = [
  [142, 224, 'A386'], [224, 307, 'C334'], [307, 389, 'A386'],
  [389, 472, 'C334'], [472, 558, 'A386'], [558, 677, 'C334'],
];

const segCells = [[142, 307, 'SEG 1'], [307, 472, 'SEG 2'], [472, 677, 'SEG 3']];

/* ---------- chart ---------- */

const yOf = value => 454 - value * 0.01915;

const violinPath = (cx, shape) => {
  const right = shape.map(([v, w]) => [cx + w, yOf(v)]);
  const left = shape.map(([v, w]) => [cx - w, yOf(v)]).reverse();
  const side = pts => pts.slice(1).map(([x, y], i) => {
    const [px, py] = pts[i];
    const before = pts[i - 1] || pts[i];
    const after = pts[i + 2] || pts[i + 1];
    return `C${px + (x - before[0]) / 6} ${py + (y - before[1]) / 6} ${x - (after[0] - px) / 6} ${y - (after[1] - py) / 6} ${x} ${y}`;
  }).join('');
  return `M${right[0].join(' ')}${side(right)}L${left[0].join(' ')}${side(left)}Z`;
};

const Violin = ({ x, color, whisker, box, median, shape }) => (
  <g>
    <path d={violinPath(x, shape)} fill={palette[color][1]} stroke={palette[color][0]} strokeWidth="1.6" />
    <path d={`M${x} ${yOf(whisker[1])}V${yOf(whisker[0])}`} stroke="#333" strokeWidth="1.4" />
    <rect x={x - 3} y={yOf(box[1])} width="6" height={yOf(box[0]) - yOf(box[1])} fill="#454040" />
    <circle cx={x} cy={yOf(median)} r="2" fill="#fff" />
  </g>
);

const AxisCells = ({ cells, top, bottom }) => cells.map(([x1, x2, label]) => (
  <g key={x1}>
    <rect x={x1} y={top} width={x2 - x1} height={bottom - top} fill="none" stroke="#111" strokeWidth="1.4" />
    <text x={(x1 + x2) / 2} y={(top + bottom) / 2 + 5} textAnchor="middle">{label}</text>
  </g>
));

const Chart = () => (
  <ChartSvg width="785" height="601" viewBox="0 0 785 601">
    <rect x="142" y="71" width="535" height="431" fill="none" stroke="#111" strokeWidth="1.5" />
    {[20000, 15000, 10000, 5000, 0].map(v => (
      <g key={v}>
        <path d={`M133 ${yOf(v)}h9M137 ${yOf(v - 2500)}h5`} stroke="#111" strokeWidth="1.5" />
        <text x="128" y={yOf(v) + 6} textAnchor="end">{v}</text>
      </g>
    ))}
    <text transform="translate(67 286) rotate(-90)" textAnchor="middle" fontSize="21">Range</text>
    {violins.map(v => <Violin key={v.x} {...v} />)}
    <AxisCells cells={typeCells} top={502} bottom={532} />
    <AxisCells cells={machineCells} top={532} bottom={561} />
    <AxisCells cells={segCells} top={561} bottom={590} />
    <g fontSize="22">
      <rect x="590" y="26" width="220" height="85" fill="#fff" stroke="#111" strokeWidth="1.5" />
      <rect x="592" y="28" width="51" height="26" fill="#404040" />
      <path d="M610 58h16M610 81h16M618 58v23" stroke="#333" strokeWidth="1.5" />
      <circle cx="618" cy="96" r="2.5" fill="none" stroke="#444" />
      <text x="648" y="48">25%~75%</text>
      <text x="649" y="76">1.5IQR内的范围</text>
      <text x="649" y="102">中位数</text>
    </g>
  </ChartSvg>
);

/* ---------- parts ---------- */

const ToolStrip = ({ items, width }) => items.map((name, i) => (
  name === '|'
    ? <Divider key={i} />
    : <IconButton key={i} $width={width} aria-label={name}><Icon name={name} /></IconButton>
));

const DropTool = ({ name }) => (
  <>
    <IconButton $width="30px" aria-label={name}><Icon name={name} /></IconButton>
    <ArrowButton aria-label={`${name} options`} />
  </>
);

const PaletteItems = ({ items }) => items.map((name, i) => (
  name === '|'
    ? <Divider $flat key={i} />
    : (
      <PaletteRow $center key={i}>
        <IconButton aria-label={name}><Icon name={name} size={24} /></IconButton>
      </PaletteRow>
    )
));

const PickButtons = () => (
  <>
    <SmallButton type="button" aria-label="Select from worksheet">
      <svg width="18" height="22" viewBox="0 0 18 22">
        <path d="M0 0h18v22H0z" fill="#f6f6f6" />
        <path d="M1 1h9v3H1z" fill="#14147a" />
        <path d="M4 5l9 1-2 2 4 5-2 2-4-5-3 2z" fill="#d01818" />
        <path d="M10 17h7M10 20h7" stroke="#333" strokeWidth="2" />
      </svg>
    </SmallButton>
    <SmallButton type="button" aria-label="Column options"><RightArrow /></SmallButton>
  </>
);

const PlotDialog = () => {
  const [selected, setSelected] = useState(2);
  const [auto, setAuto] = useState(true);

  return (
    <Dialog role="dialog" aria-labelledby="dialog-title">
      <DialogTitle id="dialog-title">
        <svg width="22" height="19" viewBox="0 0 22 19">
          <path d="M0 0h22v19H0z" fill="#c9cfd4" />
          <path d="M2 3h9v13H2z" fill="#2f7f86" />
          <path d="M12 3h3v13h-3z" fill="#fff" />
          <path d="M16 3h4v13h-4z" fill="#e6e9ec" />
        </svg>
        Plotting: plot_gboxindexed
      </DialogTitle>
      <DialogBody>
        <FormPane onSubmit={e => e.preventDefault()}>
          <ThemeRow>
            <label htmlFor="dialog-theme">对话框主题<span>(H)</span></label>
            <ThemeInput id="dialog-theme" readOnly value="<上次使用的> *" />
            <RaisedButton type="button" aria-label="Theme menu"><RightArrow size={18} /></RaisedButton>
          </ThemeRow>
          <Description>使用索引数据创建多因子组箱线图</Description>
          <Options>
            <OptionRow $after="5px">
              <OptionLabel htmlFor="data-column">数据列</OptionLabel>
              <DataInput id="data-column" defaultValue={'[Book2]"Categorical Data - Indexed"!E"Data"'} />
              <PickButtons />
            </OptionRow>
            <OptionRow>
              <OptionLabel as="span" id="group-label">分组列</OptionLabel>
              <GroupBox>
                <GroupTools>
                  <button type="button" aria-label="Move down">
                    <svg width="14" height="12" viewBox="0 0 14 12"><path d="M1 1h3l3 6 3-6h3L7 12z" fill="#888" /></svg>
                  </button>
                  <button type="button" aria-label="Move up">
                    <svg width="14" height="12" viewBox="0 0 14 12"><path d="M1 11h3l3-6 3 6h3L7 0z" fill="#444" /></svg>
                  </button>
                  <button type="button" aria-label="Remove">
                    <svg width="14" height="12" viewBox="0 0 14 12"><path d="M2 1l10 10M12 1L2 11" stroke="#d8142c" strokeWidth="3" /></svg>
                  </button>
                  <button type="button" aria-label="Select all">
                    <svg width="14" height="10" viewBox="0 0 14 10"><path d="M1 1h12v8H1z" fill="#0000cc" stroke="#000" /></svg>
                  </button>
                  <Spacer />
                  <button type="button" aria-label="Add column"><RightArrow size={14} /></button>
                </GroupTools>
                <GroupList role="listbox" aria-labelledby="group-label">
                  {groupItems.map((item, i) => (
                    <GroupItem
                      key={item}
                      role="option"
                      aria-selected={i === selected}
                      $selected={i === selected}
                      onClick={() => setSelected(i)}
                    >
                      {item}
                    </GroupItem>
                  ))}
                </GroupList>
              </GroupBox>
            </OptionRow>
            <OptionRow>
              <OptionLabel htmlFor="graph-theme">图形主题</OptionLabel>
              <SelectBox>
                <ThemeSelect id="graph-theme" defaultValue="Box_Violin">
                  <option>Box_Violin</option>
                </ThemeSelect>
                <svg width="14" height="8" viewBox="0 0 14 8"><path d="M1 1l6 5 6-5" fill="none" stroke="#555" strokeWidth="2" /></svg>
              </SelectBox>
            </OptionRow>
            <OptionRow>
              <OptionLabel htmlFor="output-data">输出数据</OptionLabel>
              <DataInput id="output-data" defaultValue="[<输入>]<新建>" />
              <PickButtons />
            </OptionRow>
          </Options>
          <Actions>
            <CheckLabel>
              <CheckBox type="checkbox" checked={auto} onChange={e => setAuto(e.target.checked)} />
              自动预览
            </CheckLabel>
            <ActionButton type="button" disabled>预览</ActionButton>
            <ActionButton type="submit" $primary>确定</ActionButton>
            <ActionButton type="button">取消</ActionButton>
            <CollapseButton type="button" aria-label="Collapse">
              <svg width="16" height="16" viewBox="0 0 16 16"><path d="M8 1L2 8l6 7M14 1L8 8l6 7" fill="none" stroke="#1c10b0" strokeWidth="2" /></svg>
            </CollapseButton>
          </Actions>
        </FormPane>
        <PreviewPane>
          <TabList role="tablist">
            <Tab role="tab" aria-selected="false">提示</Tab>
            <Tab role="tab" aria-selected="true" $active>预览</Tab>
          </TabList>
          <PreviewFrame>
            <PreviewArea><Chart /></PreviewArea>
          </PreviewFrame>
        </PreviewPane>
      </DialogBody>
      <Cursor width="20" height="30" viewBox="0 0 20 30">
        <path d="M2 1v23l5-5 5 10 4-2-5-9h7z" fill="#fff" stroke="#222" strokeWidth="1.5" />
      </Cursor>
    </Dialog>
  );
};

const Book = () => (
  <BookWindow>
    <BookTitle>
      <svg width="24" height="24" viewBox="0 0 24 24">
        <path d="M1 2h22v21H1z" fill="#7fe07f" stroke="#222" />
        <path d="M1 2h22v5H1z" fill="#fff" />
        <path d="M4 4h3M11 4h3M18 4h3" stroke="#d33" strokeWidth="3" />
        <path d="M1 8h22M1 13h22M1 18h22M6 8v15M12 8v15M18 8v15" stroke="#333" />
      </svg>
      Book2
    </BookTitle>
    <Sheet>
      <tbody>
        {sheetRows.map((label, i) => <tr key={i}><th scope="row">{label}</th></tr>)}
      </tbody>
    </Sheet>
    <SheetTabs>
      <ScrollButton aria-label="Previous sheet">
        <svg width="10" height="12" viewBox="0 0 10 12"><path d="M8 0v12L1 6z" fill="#555" /></svg>
      </ScrollButton>
      <ScrollButton aria-label="Next sheet">
        <svg width="10" height="12" viewBox="0 0 10 12"><path d="M2 0v12l7-6z" fill="#555" /></svg>
      </ScrollButton>
      <svg width="14" height="25" viewBox="0 0 14 25"><path d="M2 0l10 25" stroke="#111" strokeWidth="2" /></svg>
      Categorical
    </SheetTabs>
  </BookWindow>
);

const App = () => (
  <Screen>
    <GlobalStyle />
    <AppWindow>
      <TitleBar>
        <svg width="26" height="26" viewBox="0 0 26 26">
          <path d="M8 2h17v19H8z" fill="#f4f4f8" stroke="#556" />
          <path d="M8 7h17M8 12h17M14 2v19M20 2v19" stroke="#889" />
          <ellipse cx="11" cy="15" rx="10" ry="10" fill="#e2574c" stroke="#b5281f" />
          <path d="M7 9v11h10M8 18l4-4 2 1 4-6" stroke="#fff" strokeWidth="1.6" fill="none" />
        </svg>
        <TitleText>{'StatsOverview.opju * - D:\\Data\\ - /1. Unstack and Quick Stats/ <+1> - OriginPro Trial 2020 64-bit'}</TitleText>
        <WindowButton aria-label="Minimize">
          <svg width="18" height="18" viewBox="0 0 18 18"><path d="M1 10h16" stroke="#111" strokeWidth="2" /></svg>
        </WindowButton>
        <WindowButton aria-label="Maximize">
          <svg width="18" height="18" viewBox="0 0 18 18"><path d="M2 2h14v14H2z" fill="none" stroke="#111" strokeWidth="2" /></svg>
        </WindowButton>
        <WindowButton aria-label="Close">
          <svg width="18" height="18" viewBox="0 0 18 18"><path d="M1 1l16 16M17 1L1 17" stroke="#111" strokeWidth="1.5" /></svg>
        </WindowButton>
      </TitleBar>
      <MenuBar>
        <Grip />
        {menus.map(([label, key]) => (
          <MenuButton key={key}>{label}<span>({key})</span></MenuButton>
        ))}
      </MenuBar>
      <ToolRow $height="36px">
        <ToolGroup $flex="1">
          <Grip $after="5px" />
          <ToolStrip items={['page', 'folder', 'sheet', 'graph', 'sheet', 'fx']} />
          <Spacer />
          <IconButton aria-label="Spell check">
            <svg width="26" height="26" viewBox="0 0 26 26">
              <text x="13" y="13" textAnchor="middle" fontSize="14" fontFamily="Liberation Mono" fill="#555">abc</text>
              <path d="M10 17h6v6h-6z" fill="#555" />
            </svg>
          </IconButton>
          <IconButton>
            <svg width="28" height="20" viewBox="0 0 28 20">
              <text x="14" y="14" textAnchor="middle" fontSize="10" fontWeight="700" fontFamily="Liberation Mono" fill="#555">HOME</text>
            </svg>
          </IconButton>
          <Divider />
        </ToolGroup>
        <OverflowButton more />
        <ToolGroup $width="43px"><Grip /></ToolGroup>
        <OverflowButton more />
      </ToolRow>
      <ToolRow $height="39px">
        <ToolGroup $width="115px">
          <Grip $after="6px" />
          <ToolStrip items={['cut', 'copy', 'paste']} />
        </ToolGroup>
        <OverflowButton />
        <ToolGroup $flex="1">
          <Grip $after="5px" />
          <ToolStrip items={['wand', 'digits']} />
          <Spacer />
          <ToolStrip items={['cellA']} width="22px" />
        </ToolGroup>
        <OverflowButton more />
        <ToolGroup $width="43px"><Grip /></ToolGroup>
        <OverflowButton more />
        <ToolGroup $width="43px"><Grip /></ToolGroup>
        <OverflowButton more />
      </ToolRow>
      <Body>
        <SideTabs>
          <SideTab $height="173px">项目管理器 (3)</SideTab>
          <SideTab $height="121px">消息日志</SideTab>
          <SideTab $height="124px" $pad="14px">提示日志</SideTab>
        </SideTabs>
        <PaletteColumn $width="56px">
          <Palette $grow>
            <PaletteGrip><Grip $flat /></PaletteGrip>
            {leftTools.map(([name, menu], i) => (
              <PaletteRow $grow key={name}>
                <ToolButton $active={i === 0} aria-label={name}><Icon name={name} /></ToolButton>
                {menu && <ArrowButton $narrow aria-label={`${name} options`} />}
              </PaletteRow>
            ))}
            <PaletteEnd><EndArrow /></PaletteEnd>
          </Palette>
          <Palette $width="38px">
            <PaletteGrip><Grip $flat /></PaletteGrip>
            <PaletteItems items={['lines', 'rings', 'fraction', 'star', 'ruler']} />
            <PaletteEnd $height="50px"><EndArrow /></PaletteEnd>
          </Palette>
        </PaletteColumn>
        <Center>
          <Workspace><Book /></Workspace>
          <BottomTools>
            <ToolGroup>
              <Grip $after="5px" />
              {plotTools.map(name => <DropTool key={name} name={name} />)}
              <IconButton $width="30px" aria-label="Template library"><Icon name="plotTemplate" /></IconButton>
            </ToolGroup>
            <OverflowButton />
            <ToolGroup>
              <Grip $after="5px" />
              <DropTool name="cubeBars" />
              <Divider />
              {['cubeFill', 'cubeDots', 'gridFill', 'split'].map(name => <DropTool key={name} name={name} />)}
              <ToolStrip items={['block']} />
            </ToolGroup>
            <OverflowButton />
            <ToolGroup>
              <Grip $after="3px" />
              <ToolStrip items={maskTools} />
            </ToolGroup>
            <OverflowButton />
            <Spacer />
            <ToolGroup>
              <Grip $after="5px" />
              <ToolStrip items={objectTools} />
              <SelectBox>
                <SizeSelect aria-label="Size" disabled defaultValue="10"><option>10</option></SizeSelect>
                <svg width="12" height="7" viewBox="0 0 12 7"><path d="M0 0h12L6 7z" fill="#888" /></svg>
              </SelectBox>
            </ToolGroup>
            <OverflowButton />
          </BottomTools>
        </Center>
        <PaletteColumn $width="40px">
          <Palette $grow>
            <PaletteGrip><Grip $flat /></PaletteGrip>
            <PaletteItems items={rightTools} />
            <Spacer />
            <PaletteEnd $height="22px"><EndArrow /></PaletteEnd>
          </Palette>
          <Palette>
            <PaletteGrip><Grip $flat /></PaletteGrip>
            <PaletteItems items={alignTools} />
            <PaletteEnd>
              <svg width="6" height="12" viewBox="0 0 6 12"><path d="M0 0h6L3 4zM0 7h6l-3 4z" fill="#111" /></svg>
              <EndArrow />
            </PaletteEnd>
          </Palette>
        </PaletteColumn>
        <SideTabs $right>
          <SideTab $right $height="83px">Apps</SideTab>
          <SideTab $right $height="155px" $pad="26px">对象管理器</SideTab>
        </SideTabs>
      </Body>
      <StatusBar>
        <StatusCell>平均值=0 求和=0 计数=0</StatusCell>
        <StatusCell $gap="10px">AU : 开</StatusCell>
        <StatusCell $gap="8px" $long>{'1: [Book2]"Categorical Data - Indexed"!'}</StatusCell>
        <span>弧度</span>
      </StatusBar>
      <PlotDialog />
    </AppWindow>
    <Ball width="44" height="44" viewBox="0 0 44 44">
      <circle cx="22" cy="22" r="21" fill="#e8604c" stroke="#c4382a" />
      <ellipse cx="22" cy="13" rx="16" ry="10" fill="#f6a596" opacity=".7" />
      <path d="M22 6v36M4 26h36" stroke="#f4a89a" />
      <path d="M12 34l10-9 3-11 9-6" fill="none" stroke="#5c5060" strokeWidth="1.5" />
      <path d="M10 32h4v4h-4zM20 23h4v4h-4zM23 12h4v4h-4zM31 7h4v4h-4z" fill="#54586c" />
    </Ball>
    <Watermark><b>bilibili</b>BV1f7411T7mP P8 00:00:44/00:02:44</Watermark>
    <SourceLink href="https://blog.csdn.net/Temmie1024">https://blog.csdn.net/Temmie1024</SourceLink>
  </Screen>
);

export default App;
